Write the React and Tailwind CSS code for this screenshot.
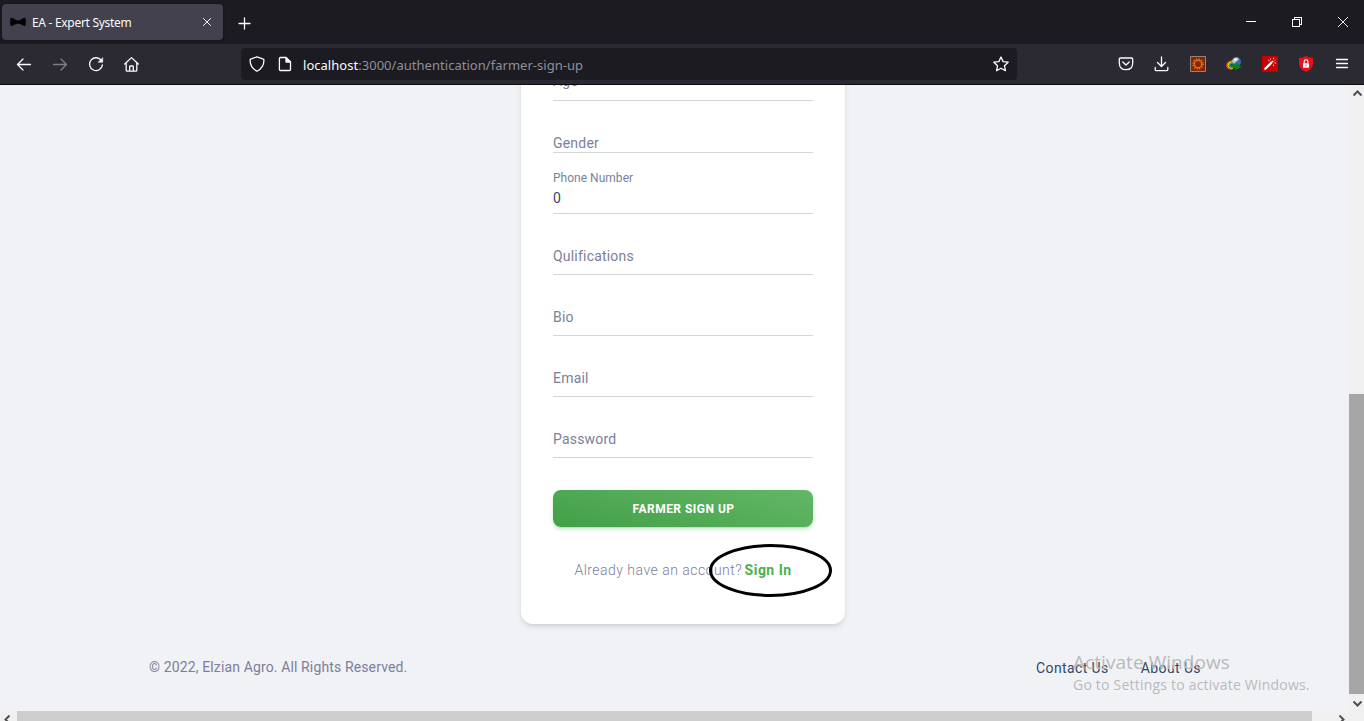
import React from "react";

const stroke = { fill: "none", stroke: "#fbfbfe", strokeLinecap: "round", strokeLinejoin: "round" };

function BowTie() {
  return (
    <svg width="16" height="16" viewBox="0 0 16 16" className="shrink-0">
      <path d="M.5 4.200Q1 3.300 2.500 3.900L6.500 6.200h3l4-2.300q1.500-.6 2 .3.600 3.700 0 7.300-.5.900-2 .3L9.500 9.800h-3l-4 2Q1 12.400.5 11.500-.1 8 .5 4.200Z" fill="#000" />
    </svg>
  );
}

function TabBar() {
  return (
    <div className="flex h-11 shrink-0 items-center bg-[#1c1b22]">
      <div className="ml-0.5 flex h-9 w-[221px] items-center rounded bg-[#42414d] pl-2 pr-2.5 shadow-[0_0_3px_rgba(0,0,0,0.5)]">
        <BowTie />
        <span className="ml-1.5 mt-0.5 flex-1 whitespace-nowrap font-['Noto_Sans',sans-serif] text-[12px] leading-4 tracking-[-0.3px] text-[#fbfbfe]">EA - Expert System</span>
        <svg width="12" height="12" viewBox="0 0 12 12"><path d="M2.500 2.500l7 7M9.500 2.500l-7 7" {...stroke} strokeWidth="1" /></svg>
      </div>
      <svg width="14" height="14" viewBox="0 0 14 14" className="ml-[14px] mt-px"><path d="M7.500 2v11M2 7.500h11" {...stroke} strokeWidth="1.300" /></svg>
      <div className="flex-1" />
      <div className="flex items-center gap-9 pr-[16px]">
        <svg width="10" height="10" viewBox="0 0 10 10" shapeRendering="crispEdges"><path d="M0 4h10v1H0z" fill="#fff" /></svg>
        <svg width="10" height="10" viewBox="0 0 10 10" shapeRendering="crispEdges"><path d="M.5 2.500h7v7h-7zM2.500 2.500v-2h7v7h-2" fill="none" stroke="#fff" /></svg>
        <svg width="10" height="10" viewBox="0 0 10 10"><path d="M0 0l10 10M10 0L0 10" stroke="#fff" fill="none" strokeWidth=".9" /></svg>
      </div>
    </div>
  );
}

function Icon({ children, className = "" }) {
  return (
    <svg width="16" height="16" viewBox="0 0 16 16" className={"shrink-0 " + className} {...stroke} strokeWidth="1.300">
      {children}
    </svg>
  );
}

function Toolbar() {
  return (
    <div className="flex h-[41px] shrink-0 items-center border-b border-[#0c0c0d] bg-[#2b2a33] pl-4 pr-[14px]">
      <div className="flex w-[225px] gap-5">
        <Icon><path d="M1.500 8.500h13M7 3L1.500 8.500 7 14" /></Icon>
        <Icon className="opacity-40"><path d="M1.500 8.500h13M9 3l5.500 5.500L9 14" /></Icon>
        <Icon>
          <path d="M13.500 4.800A6.400 6.400 0 1 0 14.400 8.900" />
          <path d="M14.700 2v4.200h-4.200z" fill="#fbfbfe" strokeWidth=".6" />
        </Icon>
        <Icon>
          <path d="M.7 8L7.500 1.600 14.300 8M2.200 7v7.200q0 .9.900.9h8.800q.9 0 .9-.9V7M5.700 15v-4.200q0-.8.8-.8h2q.8 0 .8.8V15" />
        </Icon>
      </div>
      <div className="flex h-8 w-[776px] items-center rounded bg-[#1c1b22] pl-2 pr-2">
        <Icon><path d="M8 .8L14.400 3.200q.5.200.5.800Q15 11.500 8 15.300 1 11.500 1.100 4q0-.6.500-.8z" /></Icon>
        <Icon className="ml-3">
          <path d="M3.400 1.500H9L13.500 6v7.500q0 1-1 1H3.400q-1 0-1-1V2.500q0-1 1-1Z" />
          <path d="M9 1.500V6h4.500z" fill="#fbfbfe" />
        </Icon>
        <span className="ml-[10px] mt-0.5 flex-1 whitespace-nowrap font-['Noto_Sans',sans-serif] text-[13px] leading-5 tracking-[0.03px] text-[#8f8f99]">
          <span className="text-[#fbfbfe]">localhost</span>:3000/authentication/farmer-sign-up
        </span>
        <Icon><path d="M8 1l2.150 4.600 5 .6-3.700 3.500 1 5L8 12.200l-4.450 2.500 1-5L.85 6.200l5-.6z" /></Icon>
      </div>
      <div className="flex flex-1 items-center justify-end gap-5">
        <Icon><path d="M2.500 2h11q1.200 0 1.200 1.200V7q0 6.700-6.700 6.700T1.300 7V3.200Q1.300 2 2.500 2ZM4.800 6L8 9l3.200-3" /></Icon>
        <Icon><path d="M7.500.8v9.400M3.500 6.500l4 4 4-4M1.200 11.500v2q0 1.200 1.200 1.200h10.200q1.200 0 1.200-1.200v-2" /></Icon>
        <svg width="16" height="16" viewBox="0 0 16 16">
          <path d="M.5.5h15v15H.5z" fill="#8c2204" stroke="#98847f" />
          <circle cx="8" cy="8" r="3.700" fill="none" stroke="#cf8018" strokeWidth="1.200" />
          <circle cx="8" cy="8" r="5" fill="none" stroke="#cf8018" strokeWidth="1.600" strokeDasharray="1.200 1.418" />
        </svg>
        <svg width="16" height="16" viewBox="0 0 16 16">
          <path d="M6.500 4.500Q.5 5.500.6 9.500q.5 4 5.500 3.800" fill="none" stroke="#d8442b" strokeWidth="1.100" />
          <path d="M7 5.500Q2 6.500 1.900 9.500q.5 3 5 2.800" fill="none" stroke="#e8d51d" strokeWidth="1.400" />
          <path d="M7 6.800Q3.300 7.800 3.500 9.500q1 2 4 1.500" fill="none" stroke="#26a8d0" strokeWidth="1.300" />
          <circle cx="10.300" cy="5.800" r="4.700" fill="#3a68b0" />
          <path d="M6 4.500Q8 1 11.500 1.500l1.500 2-2.500 2-2 2Q6 8 6 4.500Z" fill="#b5c9a0" />
          <circle cx="9.500" cy="3.500" r="1.500" fill="#f0f3e8" />
          <path d="M6 8.300l4 .4-.5-2 6.200 4.500L9 14.300l.4-2.100-4.400-.7z" fill="#07850c" />
        </svg>
        <svg width="16" height="16" viewBox="0 0 16 16">
          <path d="M0 0h16v16H0z" fill="#c90000" />
          <path d="M3.300 12.800l6-6" stroke="#fff" strokeWidth="2.300" strokeLinecap="round" />
          <path d="M10.200 5.900l.8-.8" stroke="#fff" strokeWidth="2" />
          <path d="M6 4.200h1.200M8.500 2.500v1.300M11.500 1.800v1.400M13.500 4l-1 .7M12.400 7h1.800M11.500 8.700v1.500M7.500 5l1 .8" stroke="#ffdada" strokeWidth=".9" />
        </svg>
        <svg width="16" height="16" viewBox="0 0 16 16">
          <path d="M8 0Q11 2 15 2v6q-.5 5-7 8-6.500-3-7-8V2q4 0 7-2Z" fill="#e8101a" />
          <path d="M5 7.200h6v4.500H5z" fill="#fff" />
          <path d="M6.200 7.200V5.500a1.800 1.800 0 0 1 3.600 0v1.700" fill="none" stroke="#fff" strokeWidth="1.100" />
          <path d="M7.600 8.500h.8v1.800h-.8z" fill="#e8101a" />
        </svg>
        <Icon><path d="M2.500 3.500h11M2.500 7.500h11M2.500 11.500h11" /></Icon>
      </div>
    </div>
  );
}

function Field({ label, className = "h-[61px] pb-[10px]" }) {
  return (
    <div className={"flex shrink-0 items-end border-b border-[#d2d6da] " + className}>
      <span className="text-[14px] leading-4 tracking-[0.2px] text-[#7b809a]">{label}</span>
    </div>
  );
}

function SignUpCard() {
  return (
    <div className="relative ml-[521px] flex w-[324px] shrink-0 flex-col rounded-xl bg-white px-8 shadow-[0_4px_6px_-1px_rgba(0,0,0,0.1),0_2px_4px_-1px_rgba(0,0,0,0.06)]">
      <Field label="Age" className="h-[61px] pb-[11px]" />
      <Field label="Gender" className="h-[52px] pb-px" />
      <div className="flex h-[61px] flex-col border-b border-[#d2d6da] pt-[17px]">
        <span className="text-[12px] leading-4 tracking-[0.02px] text-[#7b809a]">Phone Number</span>
        <span className="mt-1 text-[14px] leading-4 text-[#344767]">0</span>
      </div>
      <Field label="Qulifications" />
      <Field label="Bio" />
      <Field label="Email" />
      <Field label="Password" />
      <button className="mt-8 h-[37px] rounded-lg bg-linear-[195deg,#62b766,#43a047] pl-px text-[12px] font-bold tracking-[0.48px] text-white shadow-[0_3px_3px_rgba(76,175,80,0.15),0_3px_1px_-2px_rgba(76,175,80,0.2),0_1px_5px_rgba(76,175,80,0.15)]">
        FARMER SIGN UP
      </button>
      <p className="mb-[44px] mt-[33px] whitespace-nowrap text-center text-[14px] leading-5 text-[#7b809a]">
        <span className="font-light tracking-[0.48px]">Already have an account?</span>
        <a className="ml-[2.500px] font-bold tracking-[0.48px] text-[#4caf50]">Sign In</a>
      </p>
      <svg width="124" height="54" viewBox="0 0 124 54" className="absolute bottom-[27px] left-[188px]">
        <ellipse cx="61.500" cy="27.500" rx="60" ry="25" fill="none" stroke="#000" strokeWidth="3" />
      </svg>
    </div>
  );
}

function Footer() {
  return (
    <footer className="flex h-[87px] shrink-0 items-start justify-between pl-[149px] pr-[148px] pt-[33px] text-[14px] leading-5">
      <span className="tracking-[0.13px] text-[#7b809a]">© 2022, Elzian Agro. All Rights Reserved.</span>
      <nav className="flex gap-8 pt-px tracking-[0.4px] text-[#344767]">
        <a>Contact Us</a>
        <a>About Us</a>
      </nav>
    </footer>
  );
}

function Chevron({ d, className = "" }) {
  return (
    <svg width="9" height="9" viewBox="0 0 9 9" className={"shrink-0 " + className}>
      <path d={d} fill="none" stroke="#505050" strokeWidth="2" />
    </svg>
  );
}

export default function App() {
  return (
    <div className="relative flex h-[721px] w-[1364px] flex-col overflow-hidden bg-[#f0f2f5] font-['Roboto',sans-serif]">
      <TabBar />
      <Toolbar />
      <div className="flex h-[626px] shrink-0">
        <main className="flex w-[1349px] flex-col justify-end overflow-hidden">
          <SignUpCard />
          <Footer />
        </main>
        <div className="flex w-[15px] flex-col items-center bg-[#f0f0f0]">
          <Chevron d="M.5 6.500l4-4 4 4" className="mt-[4px] ml-px" />
          <div className="mt-[296px] h-[300px] w-[15px] bg-[#a6a6a6]" />
          <Chevron d="M.5 2.500l4 4 4-4" className="mt-[5px] ml-px" />
        </div>
      </div>
      <div className="flex h-[10px] items-start overflow-hidden bg-[#f0f0f0]">
        <Chevron d="M6.500 .5l-4 4 4 4" className="ml-[3px] mt-[4px]" />
        <div className="ml-[5px] h-[10px] w-[1295px] bg-[#cdcdcd]" />
        <Chevron d="M2.500 .5l4 4-4 4" className="ml-[25px] mt-[4px]" />
      </div>
      <div className="absolute left-[1073px] top-[650px] whitespace-nowrap font-['Open_Sans',sans-serif] text-[#b9babc]">
        <div className="text-[19px] leading-6 tracking-[0.06px]">Activate Windows</div>
        <div className="mt-px text-[14px] leading-5 tracking-[0.21px]">Go to Settings to activate Windows.</div>
      </div>
    </div>
  );
}
